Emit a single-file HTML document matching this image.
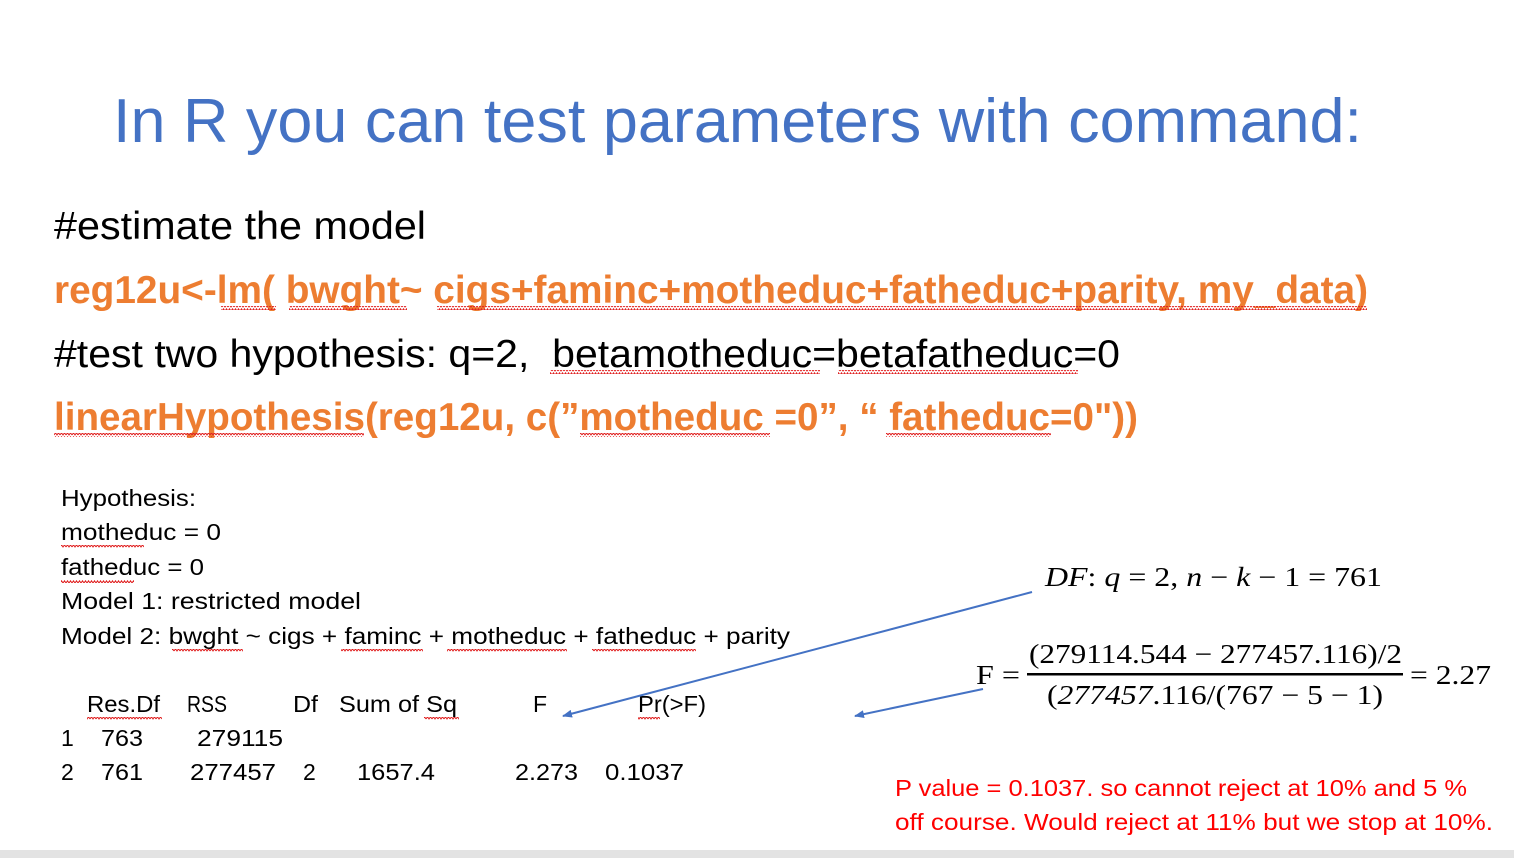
<!DOCTYPE html>
<html><head><meta charset="utf-8"><style>
html,body{margin:0;padding:0;background:#fff;width:1514px;height:858px;overflow:hidden}
svg{display:block}
text{font-family:"Liberation Sans",sans-serif;white-space:pre}
.s{font-family:"Liberation Serif",serif}
</style></head><body>
<svg width="1514" height="858" viewBox="0 0 1514 858" xmlns="http://www.w3.org/2000/svg">
<defs>
<pattern id="w" width="6" height="4" patternUnits="userSpaceOnUse"><path d="M0 3 L1.5 0.8 L3 3 L4.5 0.8 L6 3" fill="none" stroke="#e02020" stroke-width="1"/></pattern>
<marker id="ah" markerWidth="10" markerHeight="8" refX="9" refY="4" orient="auto" markerUnits="userSpaceOnUse"><path d="M0 0 L10 4 L0 8 Z" fill="#4472C4"/></marker>
</defs>
<rect x="0" y="850" width="1514" height="8" fill="#e3e3e3"/>
<text x="113" y="142" font-size="62" fill="#4472C4" textLength="1249" lengthAdjust="spacingAndGlyphs">In R you can test parameters with command:</text>
<text x="54" y="239" font-size="39" fill="#000" textLength="372" lengthAdjust="spacingAndGlyphs">#estimate the model</text>
<text x="54" y="303" font-size="39" font-weight="bold" fill="#ED7D31" textLength="1314" lengthAdjust="spacingAndGlyphs">reg12u&lt;-lm( bwght~ cigs+faminc+motheduc+fatheduc+parity, my_data)</text>
<text x="54" y="367" font-size="39" fill="#000" textLength="1066" lengthAdjust="spacingAndGlyphs">#test two hypothesis: q=2,  betamotheduc=betafatheduc=0</text>
<text x="54" y="430" font-size="39" font-weight="bold" fill="#ED7D31" textLength="1084" lengthAdjust="spacingAndGlyphs">linearHypothesis(reg12u, c(”motheduc =0”, “ fatheduc=0"))</text>
<!-- squiggles big -->
<rect x="221" y="306" width="55" height="4" fill="url(#w)"/>
<rect x="289" y="306" width="118" height="4" fill="url(#w)"/>
<rect x="437" y="306" width="760" height="4" fill="url(#w)"/>
<rect x="1197" y="306" width="170" height="4" fill="url(#w)"/>
<rect x="550" y="370" width="270" height="4" fill="url(#w)"/>
<rect x="838" y="370" width="240" height="4" fill="url(#w)"/>
<rect x="54" y="433" width="310" height="4" fill="url(#w)"/>
<rect x="580" y="433" width="190" height="4" fill="url(#w)"/>
<rect x="886" y="433" width="165" height="4" fill="url(#w)"/>
<!-- small output -->
<g font-size="23" fill="#000">
<text x="61" y="506" textLength="135" lengthAdjust="spacingAndGlyphs">Hypothesis:</text>
<text x="61" y="540" textLength="160" lengthAdjust="spacingAndGlyphs">motheduc = 0</text>
<text x="61" y="575" textLength="143" lengthAdjust="spacingAndGlyphs">fatheduc = 0</text>
<text x="61" y="609" textLength="300" lengthAdjust="spacingAndGlyphs">Model 1: restricted model</text>
<text x="61" y="644" textLength="729" lengthAdjust="spacingAndGlyphs">Model 2: bwght ~ cigs + faminc + motheduc + fatheduc + parity</text>
<text x="87" y="712" textLength="73" lengthAdjust="spacingAndGlyphs">Res.Df</text>
<text x="187" y="712" textLength="40" lengthAdjust="spacingAndGlyphs">RSS</text>
<text x="293" y="712" textLength="25" lengthAdjust="spacingAndGlyphs">Df</text>
<text x="339" y="712" textLength="118" lengthAdjust="spacingAndGlyphs">Sum of Sq</text>
<text x="533" y="712">F</text>
<text x="638" y="712" textLength="68" lengthAdjust="spacingAndGlyphs">Pr(&gt;F)</text>
<text x="61" y="746">1</text>
<text x="101" y="746" textLength="42" lengthAdjust="spacingAndGlyphs">763</text>
<text x="197" y="746" textLength="86" lengthAdjust="spacingAndGlyphs">279115</text>
<text x="61" y="780">2</text>
<text x="101" y="780" textLength="42" lengthAdjust="spacingAndGlyphs">761</text>
<text x="190" y="780" textLength="86" lengthAdjust="spacingAndGlyphs">277457</text>
<text x="303" y="780">2</text>
<text x="357" y="780" textLength="78" lengthAdjust="spacingAndGlyphs">1657.4</text>
<text x="515" y="780" textLength="63" lengthAdjust="spacingAndGlyphs">2.273</text>
<text x="605" y="780" textLength="79" lengthAdjust="spacingAndGlyphs">0.1037</text>
</g>
<rect x="61" y="545" width="83" height="3" fill="url(#w)"/>
<rect x="61" y="580" width="73" height="3" fill="url(#w)"/>
<rect x="172" y="649" width="71" height="3" fill="url(#w)"/>
<rect x="341" y="649" width="82" height="3" fill="url(#w)"/>
<rect x="447" y="649" width="120" height="3" fill="url(#w)"/>
<rect x="592" y="649" width="104" height="3" fill="url(#w)"/>
<rect x="87" y="717" width="75" height="3" fill="url(#w)"/>
<rect x="424" y="717" width="35" height="3" fill="url(#w)"/>
<rect x="638" y="717" width="22" height="3" fill="url(#w)"/>
<!-- arrows -->
<line x1="1032" y1="592" x2="563" y2="716" stroke="#4472C4" stroke-width="2" marker-end="url(#ah)"/>
<line x1="983" y1="689" x2="855" y2="716" stroke="#4472C4" stroke-width="2" marker-end="url(#ah)"/>
<!-- math -->
<g class="s" fill="#000" font-size="27">
<text class="s" x="1045" y="586" textLength="337" lengthAdjust="spacingAndGlyphs"><tspan font-style="italic">DF</tspan>: <tspan font-style="italic">q</tspan> = 2, <tspan font-style="italic">n</tspan> − <tspan font-style="italic">k</tspan> − 1 = 761</text>
<text class="s" x="976" y="684" textLength="44" lengthAdjust="spacingAndGlyphs">F =</text>
<text class="s" x="1029" y="663" textLength="373" lengthAdjust="spacingAndGlyphs">(279114.544 − 277457.116)/2</text>
<text class="s" x="1047" y="704" textLength="336" lengthAdjust="spacingAndGlyphs">(<tspan font-style="italic">277457</tspan>.116/(767 − 5 − 1)</text>
<text class="s" x="1410" y="684" textLength="81" lengthAdjust="spacingAndGlyphs">= 2.27</text>
</g>
<rect x="1027" y="673" width="376" height="2.5" fill="#000"/>
<g font-size="23" fill="#FF0000">
<text x="895" y="796" textLength="572" lengthAdjust="spacingAndGlyphs">P value = 0.1037. so cannot reject at 10% and 5 %</text>
<text x="895" y="830" textLength="598" lengthAdjust="spacingAndGlyphs">off course. Would reject at 11% but we stop at 10%.</text>
</g>
</svg>
</body></html>
